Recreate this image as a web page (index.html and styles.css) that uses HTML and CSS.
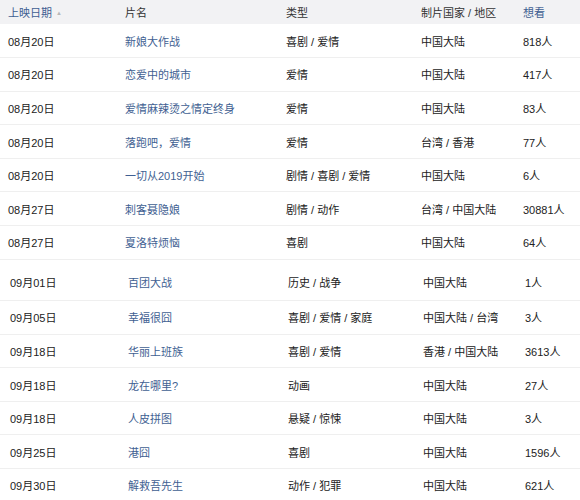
FILE: index.html
```html
<!DOCTYPE html>
<html lang="zh-CN">
<head>
<meta charset="utf-8">
<title>上映日期</title>
<link rel="stylesheet" href="styles.css">
</head>
<body>
<table class="films">
  <colgroup>
    <col class="c-date"><col class="c-title"><col class="c-type"><col class="c-country"><col class="c-count">
  </colgroup>
  <thead>
    <tr>
      <th class="sorted">上映日期<span class="arrow">▲</span></th>
      <th>片名</th>
      <th>类型</th>
      <th>制片国家 / 地区</th>
      <th class="sorted">想看</th>
    </tr>
  </thead>
  <tbody>
    <tr><td>08月20日</td><td class="title">新娘大作战</td><td>喜剧 / 爱情</td><td>中国大陆</td><td>818人</td></tr>
    <tr><td>08月20日</td><td class="title">恋爱中的城市</td><td>爱情</td><td>中国大陆</td><td>417人</td></tr>
    <tr><td>08月20日</td><td class="title">爱情麻辣烫之情定终身</td><td>爱情</td><td>中国大陆</td><td>83人</td></tr>
    <tr><td>08月20日</td><td class="title">落跑吧，爱情</td><td>爱情</td><td>台湾 / 香港</td><td>77人</td></tr>
    <tr><td>08月20日</td><td class="title">一切从2019开始</td><td>剧情 / 喜剧 / 爱情</td><td>中国大陆</td><td>6人</td></tr>
    <tr><td>08月27日</td><td class="title">刺客聂隐娘</td><td>剧情 / 动作</td><td>台湾 / 中国大陆</td><td>30881人</td></tr>
    <tr><td>08月27日</td><td class="title">夏洛特烦恼</td><td>喜剧</td><td>中国大陆</td><td>64人</td></tr>
    <tr class="g2 first"><td>09月01日</td><td class="title">百团大战</td><td>历史 / 战争</td><td>中国大陆</td><td>1人</td></tr>
    <tr class="g2"><td>09月05日</td><td class="title">幸福很囧</td><td>喜剧 / 爱情 / 家庭</td><td>中国大陆 / 台湾</td><td>3人</td></tr>
    <tr class="g2"><td>09月18日</td><td class="title">华丽上班族</td><td>喜剧 / 爱情</td><td>香港 / 中国大陆</td><td>3613人</td></tr>
    <tr class="g2"><td>09月18日</td><td class="title">龙在哪里?</td><td>动画</td><td>中国大陆</td><td>27人</td></tr>
    <tr class="g2"><td>09月18日</td><td class="title">人皮拼图</td><td>悬疑 / 惊悚</td><td>中国大陆</td><td>3人</td></tr>
    <tr class="g2"><td>09月25日</td><td class="title">港囧</td><td>喜剧</td><td>中国大陆</td><td>1596人</td></tr>
    <tr class="g2"><td>09月30日</td><td class="title">解救吾先生</td><td>动作 / 犯罪</td><td>中国大陆</td><td>621人</td></tr>
  </tbody>
</table>
</body>
</html>
```

FILE: styles.css
```css
html, body {
  margin: 0;
  padding: 0;
  background: #ffffff;
}
body {
  font-family: "Liberation Sans", "Noto Sans CJK SC", sans-serif;
  font-size: 11px;
  color: #222222;
  width: 580px;
  overflow: hidden;
}
.films {
  width: 580px;
  border-collapse: collapse;
  table-layout: fixed;
}
.c-date { width: 117px; }
.c-title { width: 161px; }
.c-type { width: 135px; }
.c-country { width: 102px; }
.c-count { width: 65px; }

.films th {
  background: #f2f2f4;
  height: 24px;
  padding: 0 0 0 8px;
  text-align: left;
  font-weight: normal;
  color: #333333;
  white-space: nowrap;
}
.films th.sorted {
  color: #3f5f92;
}
.arrow {
  font-size: 6px;
  color: #b8b8b8;
  margin-left: 4px;
  vertical-align: 2px;
}
.films td {
  height: 33.6px;
  padding: 0 0 0 8px;
  box-sizing: border-box;
  border-bottom: 1px solid #efefef;
  white-space: nowrap;
  color: #222222;
}
.films td.title {
  color: #3f5f92;
}
.films tr.g2 td {
  padding-left: 10px;
}
.films tr.g2 td.title {
  padding-left: 11px;
}
.films tr.first td {
  height: 41.4px;
  padding-top: 5px;
}
```
